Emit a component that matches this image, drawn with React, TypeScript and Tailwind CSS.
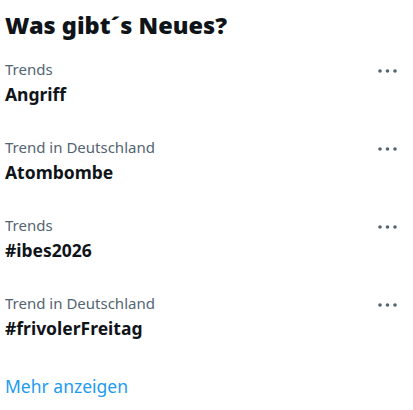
import React from "react";

const trends = [
  { label: "Trends", title: "Angriff" },
  { label: "Trend in Deutschland", title: "Atombombe" },
  { label: "Trends", title: "#ibes2026" },
  { label: "Trend in Deutschland", title: "#frivolerFreitag" },
];

function MoreDots() {
  return (
    <svg width="19" height="4" viewBox="0 0 19 4" className="fill-[#536471]">
      <circle cx="2" cy="2" r="1.8" />
      <circle cx="9.5" cy="2" r="1.8" />
      <circle cx="17" cy="2" r="1.8" />
    </svg>
  );
}

export default function App() {
  return (
    <div className="w-[413px] h-[410px] bg-white font-['Noto_Sans',sans-serif] pl-[5px] overflow-hidden">
      {/* Header */}
      <h2 className="text-[23.5px] leading-[29px] font-black text-[#0f1419] mt-[11px]">
        Was gibt´s Neues?
      </h2>

      {/* Trend list */}
      <div className="mt-[20px] flex flex-col">
        {trends.map((t, i) => (
          <div key={i} className="h-[78px] flex justify-between pr-[16px]">
            <div className="flex flex-col">
              <span className="text-[15px] leading-[19px] text-[#536471]">{t.label}</span>
              <span className="text-[17.5px] leading-[24px] font-bold text-[#0f1419] mt-[2.6px]">{t.title}</span>
            </div>
            <div className="pt-[9px]">
              <MoreDots />
            </div>
          </div>
        ))}
      </div>

      <div className="mt-[1.6px] text-[17.5px] leading-[24px] text-[#1d9bf0]">Mehr anzeigen</div>
    </div>
  );
}
